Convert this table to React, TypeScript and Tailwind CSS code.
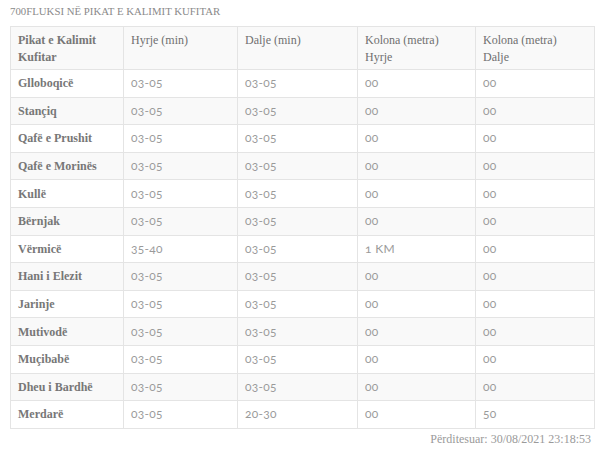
import React from "react";

const rows: [string, string, string, string, string][] = [
  ["Glloboqicë", "03-05", "03-05", "00", "00"],
  ["Stançiq", "03-05", "03-05", "00", "00"],
  ["Qafë e Prushit", "03-05", "03-05", "00", "00"],
  ["Qafë e Morinës", "03-05", "03-05", "00", "00"],
  ["Kullë", "03-05", "03-05", "00", "00"],
  ["Bërnjak", "03-05", "03-05", "00", "00"],
  ["Vërmicë", "35-40", "03-05", "1 KM", "00"],
  ["Hani i Elezit", "03-05", "03-05", "00", "00"],
  ["Jarinje", "03-05", "03-05", "00", "00"],
  ["Mutivodë", "03-05", "03-05", "00", "00"],
  ["Muçibabë", "03-05", "03-05", "00", "00"],
  ["Dheu i Bardhë", "03-05", "03-05", "00", "00"],
  ["Merdarë", "03-05", "20-30", "00", "50"],
];

const serif = "font-['Liberation_Serif','DejaVu_Serif',serif]";

export default function App() {
  return (
    <div className="w-[600px] h-[460px] bg-white px-[10px] pt-[4px]">
      <div className={`${serif} text-[10.8px] leading-[14px] text-[#8a8a8a] oldstyle-nums`}>
        700FLUKSI NË PIKAT E KALIMIT KUFITAR
      </div>
      <table className="mt-[8px] w-[584px] border-collapse table-fixed">
        <colgroup>
          <col className="w-[113px]" />
          <col className="w-[114px]" />
          <col className="w-[120px]" />
          <col className="w-[118px]" />
          <col className="w-[119px]" />
        </colgroup>
        <thead>
          <tr className="bg-[#f9f9f9] h-[43px]">
            {["Pikat e Kalimit Kufitar", "Hyrje (min)", "Dalje (min)", "Kolona (metra) Hyrje", "Kolona (metra) Dalje"].map((h, i) => (
              <th
                key={i}
                className={`border border-[#e4e4e4] align-top text-left px-[7px] pt-[5px] ${serif} ${i === 0 ? "font-bold text-[#777777]" : "font-normal text-[#707070]"} text-[12px] leading-[17px]`}
              >
                {h === "Pikat e Kalimit Kufitar" ? (
                  <>Pikat e Kalimit<br />Kufitar</>
                ) : h.startsWith("Kolona") ? (
                  <>Kolona (metra)<br />{h.split(" ").pop()}</>
                ) : (
                  h
                )}
              </th>
            ))}
          </tr>
        </thead>
        <tbody>
          {rows.map((r, ri) => (
            <tr key={ri} className={`h-[27.6px] ${ri % 2 === 1 ? "bg-[#f9f9f9]" : "bg-white"}`}>
              {r.map((c, ci) => (
                <td
                  key={ci}
                  className={`border border-[#e4e4e4] px-[7px] py-0 align-middle text-[12px] leading-[16px] ${
                    ci === 0
                      ? `${serif} font-bold text-[#777777]`
                      : "font-['Lato',sans-serif] oldstyle-nums text-[#9a9a9a] tracking-[0.3px]"
                  }`}
                >
                  {c}
                </td>
              ))}
            </tr>
          ))}
        </tbody>
      </table>
      <div className={`w-[584px] text-right pr-[3px] mt-[3px] ${serif} text-[12px] leading-[14px] text-[#9a9a9a] oldstyle-nums`}>
        Përditesuar: 30/08/2021 23:18:53
      </div>
    </div>
  );
}
